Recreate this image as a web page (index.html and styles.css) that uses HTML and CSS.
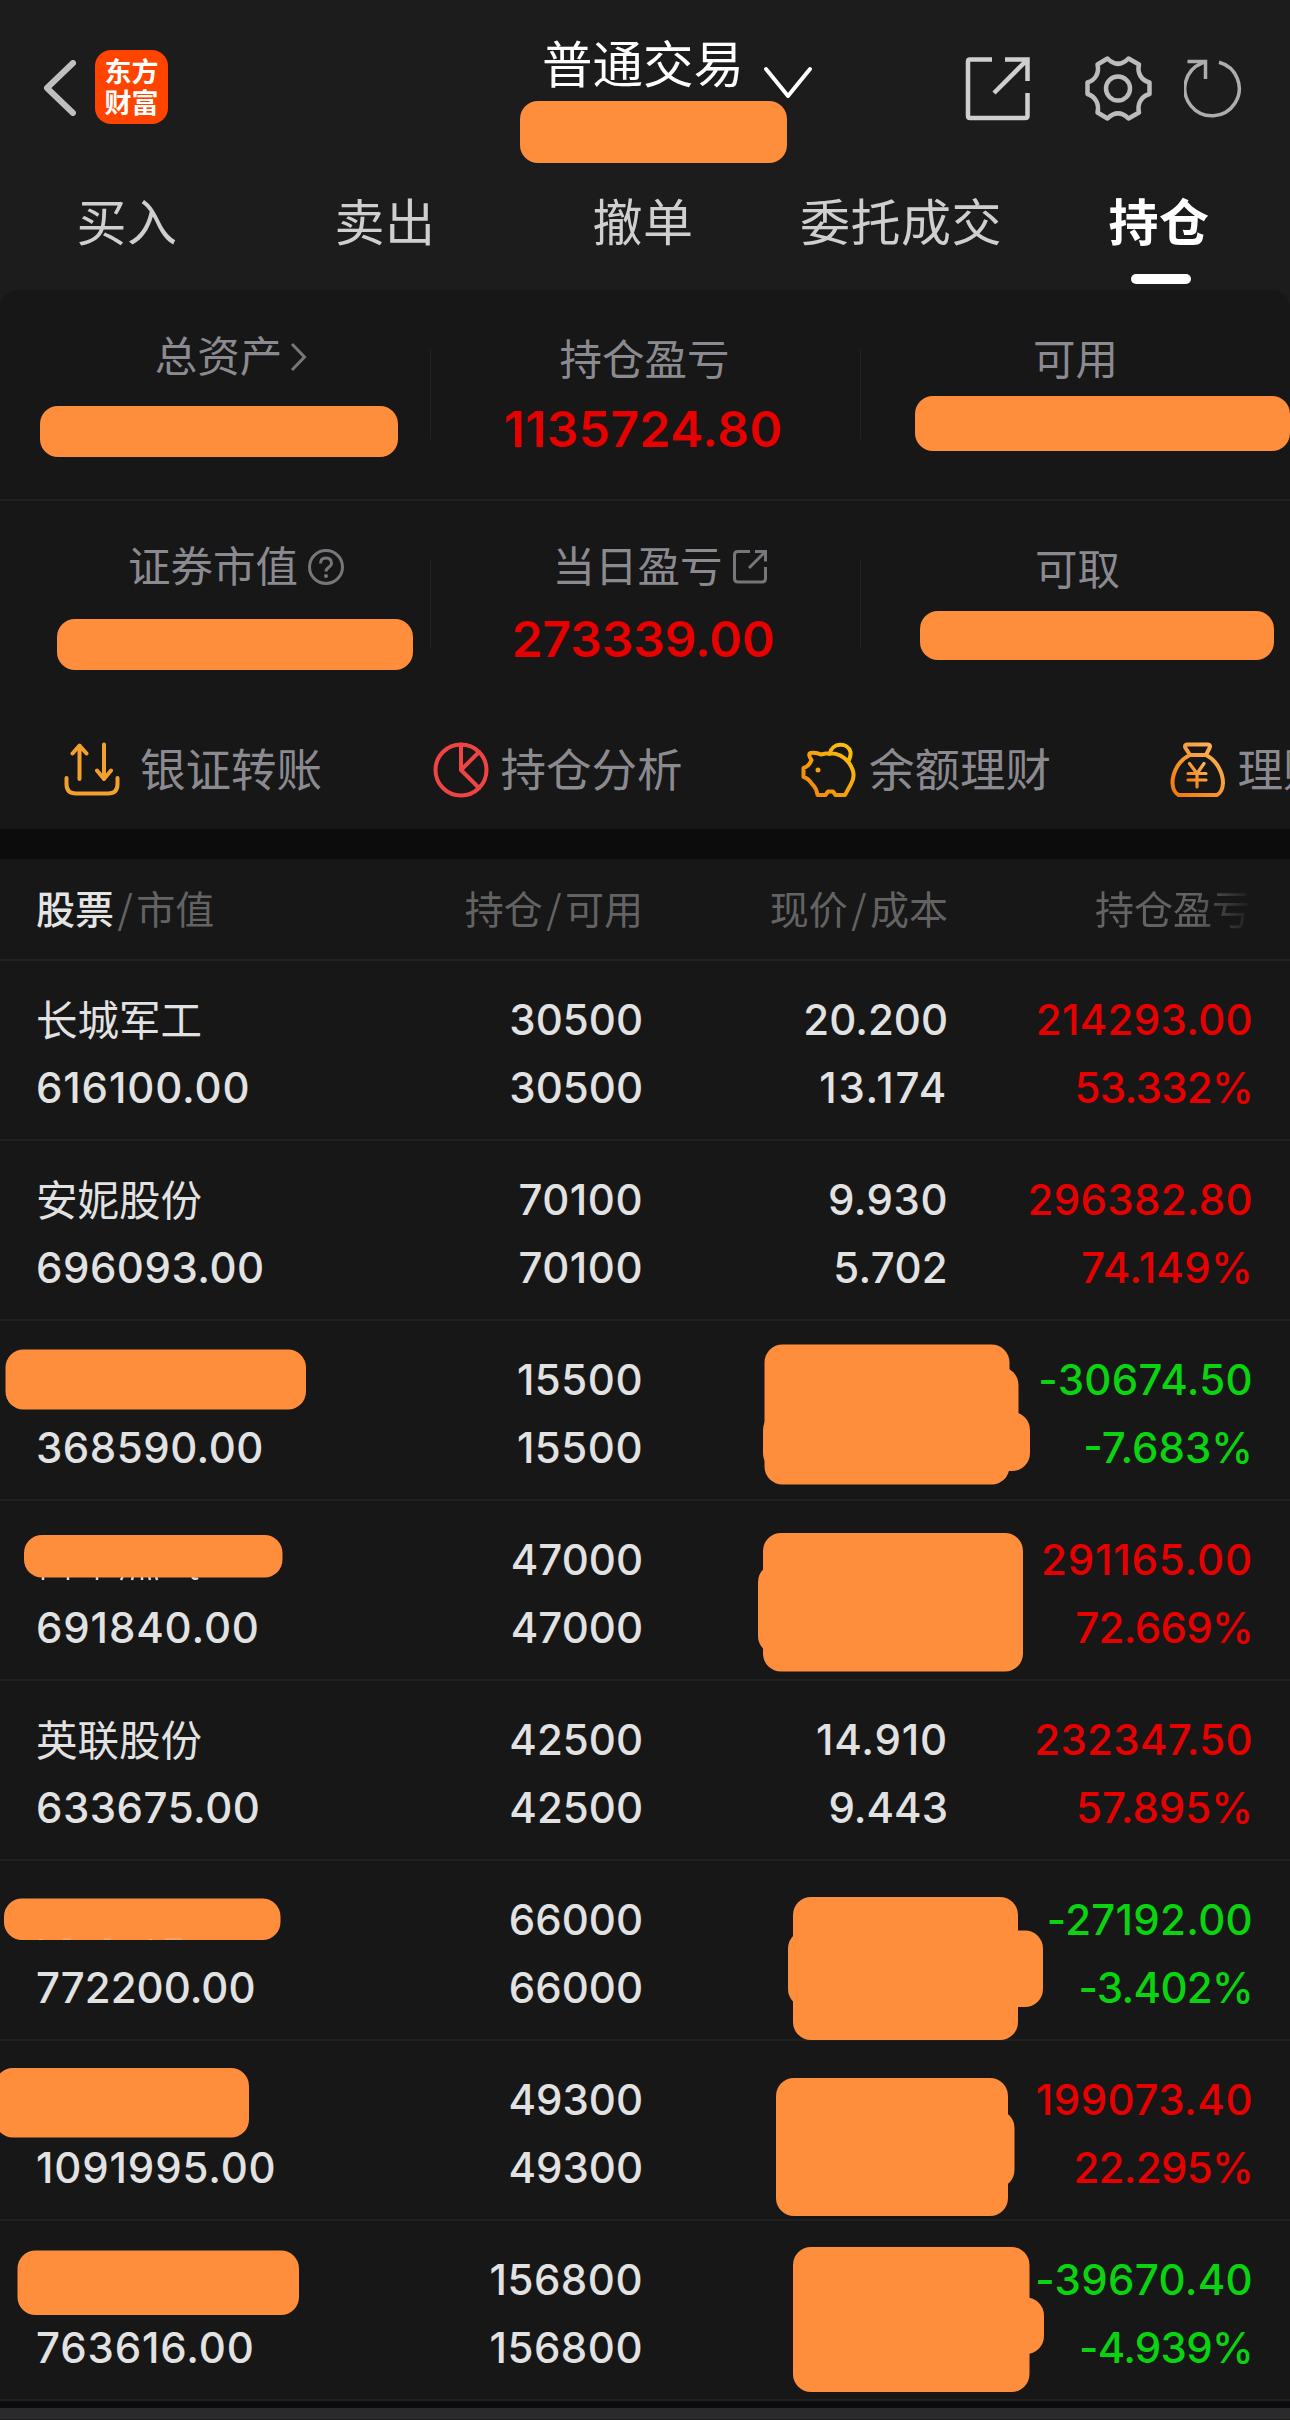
FILE: index.html
```html
<!DOCTYPE html>
<html lang="zh-CN">
<head>
<meta charset="utf-8">
<title>普通交易 - 持仓</title>
<link rel="stylesheet" href="styles.css">
</head>
<body>
<div class="app">
  <header class="topbar">
    <div class="topbar-left">
      <svg class="back" width="33" height="56" viewBox="0 0 33 56"><path d="M30 3 4 28 30 53"/></svg>
      <div class="logo">东方<br>财富</div>
    </div>
    <div class="account">
      <div class="account-name">普通交易<svg class="caret" width="48" height="34" viewBox="0 0 48 34"><path d="M2 3 24 30 46 3"/></svg></div>
      <div class="mask account-mask"></div>
    </div>
    <div class="actions">
      <svg class="ico-share" width="66" height="66" viewBox="0 0 66 66"><path d="M27 3.500H5Q3 3.500 3 5.500V60Q3 62 5 62H60Q62.500 62 62.500 60V37M40 3.500H62.500V25M62 4 29 37"/></svg>
      <svg class="ico-gear" width="68" height="67" viewBox="0 0 68 67"><path d="M22.500 3.500Q33 14 43.500 3.500L54 9.500C52 18 56 25 64.500 27.500V39C56 41.500 52 49 54 57.500L43.500 63.500Q33 53 22.500 63.500L12.500 57.500C14.500 49 10.500 41.500 2.500 39V27.500C10.500 25 14.500 18 12.500 9.500Z"/><circle cx="33" cy="33.500" r="12"/></svg>
      <svg class="ico-refresh" width="60" height="60" viewBox="0 0 60 60"><path d="M35 3.200A27.200 27.200 0 1 1 18 4.200L21 2.500M3.500 2.500H21.500V20"/></svg>
    </div>
  </header>
  <nav class="tabs">
    <div class="tab">买入</div><div class="tab">卖出</div><div class="tab">撤单</div><div class="tab">委托成交</div><div class="tab active">持仓</div>
  </nav>

  <section class="summary">
    <div class="sum-row first">
      <div class="cell total"><div class="label">总资产<svg width="17" height="30" viewBox="0 0 17 30"><path d="M2 2 14.500 15 2 28"/></svg></div><div class="mask"></div></div>
      <i></i>
      <div class="cell"><div class="label">持仓盈亏</div><div class="amount">1135724.80</div></div>
      <i></i>
      <div class="cell usable"><div class="label">可用</div><div class="mask"></div></div>
    </div>
    <div class="sum-row second">
      <div class="cell market"><div class="label">证券市值<svg width="38" height="38" viewBox="0 0 38 38"><circle cx="19" cy="19" r="16.500"/><path d="M13.500 15.500Q13.500 10 19 10T24.500 15.500C24.500 19.500 19 19 19 23.500"/><circle class="dot" cx="19" cy="28" r="2"/></svg></div><div class="mask"></div></div>
      <i></i>
      <div class="cell today"><div class="label">当日盈亏<svg width="36" height="36" viewBox="0 0 36 36"><path d="M18 2.500H6Q2.500 2.500 2.500 6V29.500Q2.500 33 6 33H30Q33.500 33 33.500 29.500V18M23 2.500H33.500V12.500M33 3 17 19"/></svg></div><div class="amount tight">273339.00</div></div>
      <i></i>
      <div class="cell takeable"><div class="label">可取</div><div class="mask"></div></div>
    </div>
    <div class="shortcuts">
      <div class="shortcut transfer">
        <svg width="56" height="56" viewBox="0 0 56 56"><path d="M15.500 37V4M8.500 11.500 15.500 3.500 22.500 11.500M40 2.500V37M33 28.500 40 37 47 28.500M2.500 36V42Q2.500 51.500 12 51.500H44Q53.500 51.500 53.500 42V36"/></svg>银证转账</div>
      <div class="shortcut analysis">
        <svg width="56" height="56" viewBox="0 0 56 56"><circle cx="28" cy="28" r="25.500"/><path d="M28 2.500V28L46 10M28 28 46 46"/></svg>持仓分析</div>
      <div class="shortcut piggy">
        <svg width="56" height="56" viewBox="0 0 56 56"><defs><linearGradient id="gold" x1="0" y1="1" x2="1" y2="0"><stop offset="0" stop-color="#f0830a"/><stop offset="1" stop-color="#fcc40c"/></linearGradient></defs><path d="M10.500 18Q6.500 12 9.500 11Q15 10 20 12.500C34 9 43 14 48 21Q56 32 50 42L44 53H34.500L32 49.500H27L24.500 53H16.500Q15.500 46 11 42Q7 36 2.500 35V26Q8 24.500 10.500 18M28.500 12C31 0 47 0 49.500 10Q50 14 48 18"/><circle class="eye" cx="17" cy="28" r="2.500"/></svg>余额理财</div>
      <div class="shortcut bag">
        <svg width="56" height="56" viewBox="0 0 56 56"><defs><linearGradient id="amber" x1="0" y1="1" x2="1" y2="0"><stop offset="0" stop-color="#f47806"/><stop offset="1" stop-color="#fbb95e"/></linearGradient></defs><path d="M17 2.500H38Q41 3 39.500 6L36 13H20L15.500 6Q14 3 17 2.500ZM20 13C9 18 2.500 30 2.500 41Q3 50 8.500 53H47Q52.500 50 53 41C53 30 46 18 36 13"/><path class="yen" d="M19.500 21.500 27 31.500 34 21.500M27 31.500V45M18 31.500H36M18 38H36"/></svg>理财</div>
    </div>
  </section>

  <section class="holdings">
    <div class="head">
      <div class="h-name"><b>股票</b><em>/</em>市值</div><div>持仓<em>/</em>可用</div><div>现价<em>/</em>成本</div><div class="fade">持仓盈亏</div>
    </div>
    <div class="row up"><div class="c-name"><span class="name">长城军工</span><span class="w3">616100.00</span></div><div><span>30500</span><span>30500</span></div><div><span>20.200</span><span class="w4">13.174</span></div><div class="pl"><span class="w1">214293.00</span><span class="n1">53.332%</span></div></div>
    <div class="row up"><div class="c-name"><span class="name">安妮股份</span><span class="w2">696093.00</span></div><div><span class="w2">70100</span><span class="w2">70100</span></div><div><span class="w2">9.930</span><span class="w1">5.702</span></div><div class="pl"><span class="w1">296382.80</span><span class="w1">74.149%</span></div></div>
    <div class="row down"><div class="c-name"><span class="name"></span><span class="w2">368590.00</span></div><div><span class="w2">15500</span><span class="w2">15500</span></div><div></div><div class="pl"><span class="w1">-30674.50</span><span>-7.683%</span></div>
      <svg class="cover" viewBox="0 0 1290 180"><rect x="5.500" y="28.500" width="300.500" height="60" rx="18"/><rect x="764.500" y="23.500" width="245" height="140" rx="18"/><rect x="780" y="46" width="238.500" height="75" rx="18"/><rect x="763" y="91" width="267" height="59" rx="18"/></svg></div>
    <div class="row up"><div class="c-name"><span class="name"></span><span class="w3">691840.00</span></div><div><span>47000</span><span>47000</span></div><div></div><div class="pl"><span class="w3">291165.00</span><span class="n1">72.669%</span></div>
      <svg class="cover" viewBox="0 0 1290 180"><path class="ticks" d="M43 75V79M68 75V79M97 75V79M123 75 121 79M133 75 132 79M142 75V79M149 75 150 79M156 75 157 79M192 76Q195 79 198 77"/><rect x="24" y="34" width="258.500" height="42.500" rx="18"/><rect x="763" y="32" width="260" height="138.500" rx="18"/><rect x="758" y="63" width="260" height="90" rx="18"/></svg></div>
    <div class="row up"><div class="c-name"><span class="name">英联股份</span><span class="w2">633675.00</span></div><div><span>42500</span><span>42500</span></div><div><span class="w3">14.910</span><span>9.443</span></div><div class="pl"><span class="w1">232347.50</span><span>57.895%</span></div></div>
    <div class="row down"><div class="c-name"><span class="name"></span><span>772200.00</span></div><div><span>66000</span><span>66000</span></div><div></div><div class="pl"><span class="w1">-27192.00</span><span class="n1">-3.402%</span></div>
      <svg class="cover" viewBox="0 0 1290 180"><rect x="4" y="37.500" width="276.500" height="41.500" rx="18"/><path class="ticks faint" d="M39 78.500H42M63 78H71M104 78H111M149 78.500H152M165 78H182"/><rect x="793" y="36" width="225" height="143" rx="18"/><rect x="788" y="69.500" width="255" height="76.500" rx="18"/></svg></div>
    <div class="row up"><div class="c-name"><span class="name"></span><span class="w3">1091995.00</span></div><div><span>49300</span><span>49300</span></div><div></div><div class="pl"><span class="w2">199073.40</span><span class="n1">22.295%</span></div>
      <svg class="cover" viewBox="0 0 1290 180"><rect x="-5" y="27" width="254" height="69.500" rx="18"/><rect x="776" y="37" width="232" height="138" rx="18"/><rect x="790" y="69" width="224.500" height="78" rx="18"/></svg></div>
    <div class="row down"><div class="c-name"><span class="name"></span><span class="w3">763616.00</span></div><div><span class="w2">156800</span><span class="w2">156800</span></div><div></div><div class="pl"><span class="w1">-39670.40</span><span class="n1">-4.939%</span></div>
      <svg class="cover" viewBox="0 0 1290 180"><rect x="17.500" y="29.500" width="281.500" height="64.500" rx="18"/><rect x="793" y="26" width="236.500" height="145" rx="18"/><rect x="810" y="76.500" width="234" height="56.500" rx="18"/></svg></div>
  </section>
  <footer class="bottom"></footer>
</div>
</body>
</html>
```
FILE: styles.css
```css
* { box-sizing: border-box; }
body {
  margin: 0;
  background: #171717;
  font-family: "Noto Sans CJK SC", sans-serif;
}
svg { display: block; flex: none; fill: none; }
.app {
  width: 1290px;
  height: 2420px;
  overflow: hidden;
  background: #1c1c1c;
}
.mask { background: #ff8e3c; border-radius: 18px; }

.topbar {
  display: grid;
  grid-template-columns: 519px 291px 1fr;
  height: 178px;
}
.topbar-left { display: flex; padding: 50px 0 0 43px; }
.back { margin: 10px 19px 0 0; }
.back path { stroke: #bfbfbf; stroke-width: 6; stroke-linecap: round; stroke-linejoin: round; }
.logo {
  width: 73px;
  height: 74px;
  padding-top: 5px;
  border-radius: 16px;
  background: #ff4400;
  color: #fff;
  font-size: 27px;
  font-weight: 700;
  line-height: 31px;
  text-align: center;
}
.account-name {
  display: flex;
  height: 101px;
  padding: 21px 0 0 23px;
  font-size: 50.500px;
  line-height: 80px;
  white-space: nowrap;
  color: #fff;
}
.caret { margin: 45px 0 0 20px; }
.caret path { stroke: #fff; stroke-width: 4; stroke-linecap: round; stroke-linejoin: round; }
.account-mask { width: 267px; height: 62px; margin-left: 1px; }
.actions { display: flex; padding-left: 155px; }
.ico-share { margin-top: 56px; }
.ico-gear { margin: 55px 0 0 54px; }
.ico-refresh { margin: 59px 0 0 31px; }
.ico-share path { stroke: #cfcfcf; stroke-width: 4.500; }
.ico-gear path, .ico-gear circle { stroke: #bcbcbc; stroke-width: 4.500; stroke-linejoin: round; }
.ico-refresh path { stroke: #adadad; stroke-width: 3.500; }

.tabs {
  display: grid;
  grid-template-columns: repeat(5, 1fr);
  height: 112px;
  font-size: 50px;
  line-height: 82px;
  letter-spacing: 0.5px;
  color: #cfcfcf;
  text-align: center;
}
.tab { margin-left: -2px; margin-right: 2px; }
.tab.active { color: #fff; font-weight: 700; }
.tab.active::after {
  content: "";
  display: block;
  width: 60px;
  height: 10px;
  margin: 14px 0 0 101px;
  border-radius: 5px;
  background: #fff;
}

.summary {
  height: 539px;
  border-radius: 18px 18px 0 0;
  background: #171717;
  overflow: hidden;
}
.sum-row { display: grid; grid-template-columns: 430px 1px 429px 1px 1fr; }
.sum-row i { height: 90px; background: #222; }
.sum-row.first { height: 211px; border-bottom: 2px solid #1f1f1f; }
.sum-row.first i { margin-top: 59px; }
.sum-row.second { height: 209px; }
.sum-row.second i { margin-top: 58px; }
.cell { padding-top: 37px; }
.second .cell { padding-top: 33px; }
.label {
  display: flex;
  justify-content: center;
  align-items: center;
  height: 60px;
  margin-left: -2px;
  font-size: 42.500px;
  line-height: 60px;
  color: #8b8a90;
}
.label svg { margin-top: 6px; stroke: #77777b; stroke-width: 3; }
.label .dot { fill: #77777b; stroke: none; }
.amount {
  margin-top: 12px;
  margin-left: -4px;
  font-family: Inter, sans-serif;
  font-size: 50px;
  font-weight: 600;
  line-height: 60px;
  letter-spacing: 0.3px;
  text-align: center;
  color: #e60000;
}
.amount.tight { margin-top: 15px; letter-spacing: -0.3px; }
.total { padding-top: 34px; }
.total .label { padding-left: 34px; }
.total .label svg { margin-left: 8px; }
.total .mask { width: 358px; height: 51px; margin: 22px 0 0 40px; }
.usable .label { padding-left: 2px; }
.usable .mask { width: 375px; height: 55px; margin: 9px 0 0 54px; }
.market .label { padding-left: 45px; }
.market .label svg { margin-left: 9px; }
.market .mask { width: 356px; height: 51px; margin: 25px 0 0 57px; }
.today .label { padding-left: 31px; }
.today .label svg { margin-left: 9px; }
.second .takeable { padding-top: 36px; }
.takeable .label { padding-left: 6px; }
.takeable .mask { width: 354px; height: 49px; margin: 14px 0 0 59px; }

.shortcuts { display: flex; padding: 32px 0 0 64px; }
.shortcut {
  display: flex;
  flex: none;
  width: 368.500px;
  height: 56px;
  gap: 12px;
  font-size: 45.500px;
  line-height: 50px;
  white-space: nowrap;
  color: #8b8a90;
}
.transfer { gap: 20px; }
.shortcut svg { stroke-width: 4; stroke-linecap: round; stroke-linejoin: round; }
.transfer svg { stroke: #f3a02f; }
.analysis svg { stroke: #ef4444; }
.piggy svg { stroke: url(#gold); }
.piggy .eye { fill: #f5a10b; stroke: none; }
.bag svg { stroke: url(#amber); }
.bag .yen { stroke-width: 3.200; }

.holdings { border-top: 30px solid #0c0c0c; background: #171717; }
.head, .row { display: grid; grid-template-columns: 343px 300px 305px 305px; text-align: right; }
.head {
  height: 102px;
  border-bottom: 2px solid #222;
  font-size: 39px;
  line-height: 97px;
  color: #636363;
}
.head em { padding: 0 3.500px; font-style: normal; }
.head b { font-weight: 500; color: #e4e4e4; }
.h-name, .c-name { padding-left: 36px; text-align: left; }
.head .fade { padding-right: 2px; -webkit-mask: linear-gradient(90deg, #000 247px, transparent 307px); mask: linear-gradient(90deg, #000 247px, transparent 307px); }
.row {
  position: relative;
  height: 180px;
  padding-top: 25px;
  border-bottom: 2px solid #202020;
  font-family: Inter, sans-serif;
  font-size: 42px;
  font-weight: 500;
  line-height: 68px;
  color: #e2e2e2;
}
.row span { display: block; height: 68px; }
.row .name {
  font-family: "Noto Sans CJK SC", sans-serif;
  font-size: 41.500px;
  font-weight: 400;
  line-height: 65px;
}
.w1 { letter-spacing: 0.300px; }
.w2 { letter-spacing: 0.500px; }
.w3 { letter-spacing: 0.850px; }
.w4 { letter-spacing: 1.700px; }
.n1 { letter-spacing: -0.700px; }
.up .pl { color: #e60000; }
.down .pl { color: #0ad30f; }
.cover { position: absolute; left: 0; top: 0; width: 1290px; height: 180px; overflow: visible; }
.cover rect { fill: #ff8e3c; }
.ticks { stroke: #d8d8d8; stroke-width: 2.500; }
.ticks.faint { stroke: #f3b686; stroke-width: 1; }
.bottom { height: 18px; border-top: 7px solid #0c0c0c; background: #2a2a2c; }
```
